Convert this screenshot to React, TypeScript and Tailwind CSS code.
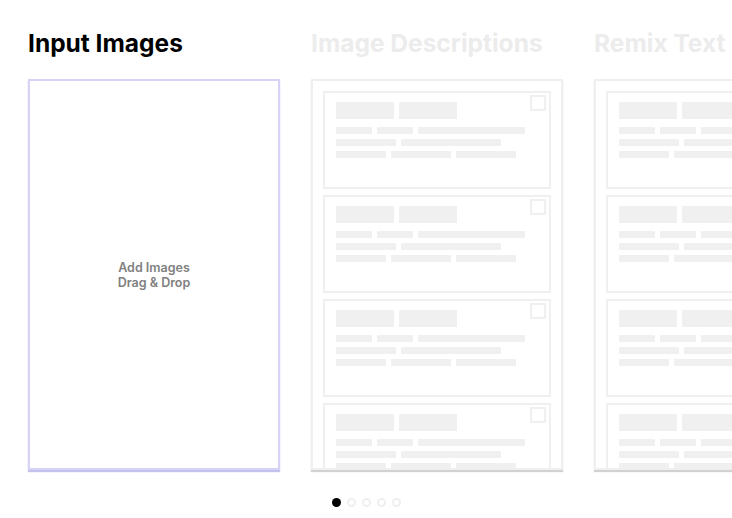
import React from 'react';

const SkeletonCard: React.FC = () => (
  <div className="relative h-[98px] shrink-0 border-2 border-[#f0f0f0] bg-white px-[11px] pt-[9px]">
    <div className="absolute right-[3px] top-[2px] h-4 w-4 border-2 border-[#f0f0f0]" />
    <div className="flex gap-[5px]">
      <div className="h-[17px] w-[58px] bg-[#f0f0f0]" />
      <div className="h-[17px] w-[58px] bg-[#f0f0f0]" />
    </div>
    <div className="mt-2 flex gap-[5px]">
      <div className="h-[7px] w-9 bg-[#f0f0f0]" />
      <div className="h-[7px] w-9 bg-[#f0f0f0]" />
      <div className="h-[7px] w-[107px] bg-[#f0f0f0]" />
    </div>
    <div className="mt-[5px] flex gap-[5px]">
      <div className="h-[7px] w-[60px] bg-[#f0f0f0]" />
      <div className="h-[7px] w-[100px] bg-[#f0f0f0]" />
    </div>
    <div className="mt-[5px] flex gap-[5px]">
      <div className="h-[7px] w-[50px] bg-[#f0f0f0]" />
      <div className="h-[7px] w-[60px] bg-[#f0f0f0]" />
      <div className="h-[7px] w-[60px] bg-[#f0f0f0]" />
    </div>
  </div>
);

const SkeletonPanel: React.FC<{ title: string }> = ({ title }) => (
  <div className="flex w-[252px] shrink-0 flex-col">
    <h2 className="h-[51px] whitespace-nowrap text-[24.5px] font-bold leading-[30px] text-[#ececec]">{title}</h2>
    <div className="h-[391px] overflow-hidden border-2 border-[#efefef] bg-white shadow-[0_2px_1px_rgba(0,0,0,0.18)]">
      <div className="flex h-full flex-col gap-[6px] overflow-hidden p-[10px]">
        <SkeletonCard />
        <SkeletonCard />
        <SkeletonCard />
        <SkeletonCard />
      </div>
    </div>
  </div>
);

const App: React.FC = () => {
  return (
    <div className="h-[518px] w-[732px] overflow-hidden bg-white font-['Inter',sans-serif]">
      <div className="flex gap-[31px] pl-[28px] pt-[28px]">
        <div className="flex w-[252px] shrink-0 flex-col">
          <h2 className="h-[51px] whitespace-nowrap text-[24.5px] font-bold leading-[30px] text-black">Input Images</h2>
          <div className="flex h-[391px] items-center justify-center border-2 border-[#d6d3f6] bg-white shadow-[0_2px_1px_rgba(190,186,235,0.9)]">
            <p className="text-center text-[12.5px] font-semibold leading-[15px] text-[#808080]">
              Add Images
              <br />
              Drag &amp; Drop
            </p>
          </div>
        </div>
        <SkeletonPanel title="Image Descriptions" />
        <SkeletonPanel title="Remix Text" />
      </div>
      <div className="mt-[28px] flex justify-center gap-[6px]">
        <div className="h-[9px] w-[9px] rounded-full bg-black" />
        <div className="h-[9px] w-[9px] rounded-full border-2 border-[#efefef]" />
        <div className="h-[9px] w-[9px] rounded-full border-2 border-[#efefef]" />
        <div className="h-[9px] w-[9px] rounded-full border-2 border-[#efefef]" />
        <div className="h-[9px] w-[9px] rounded-full border-2 border-[#efefef]" />
      </div>
    </div>
  );
};

export default App;
